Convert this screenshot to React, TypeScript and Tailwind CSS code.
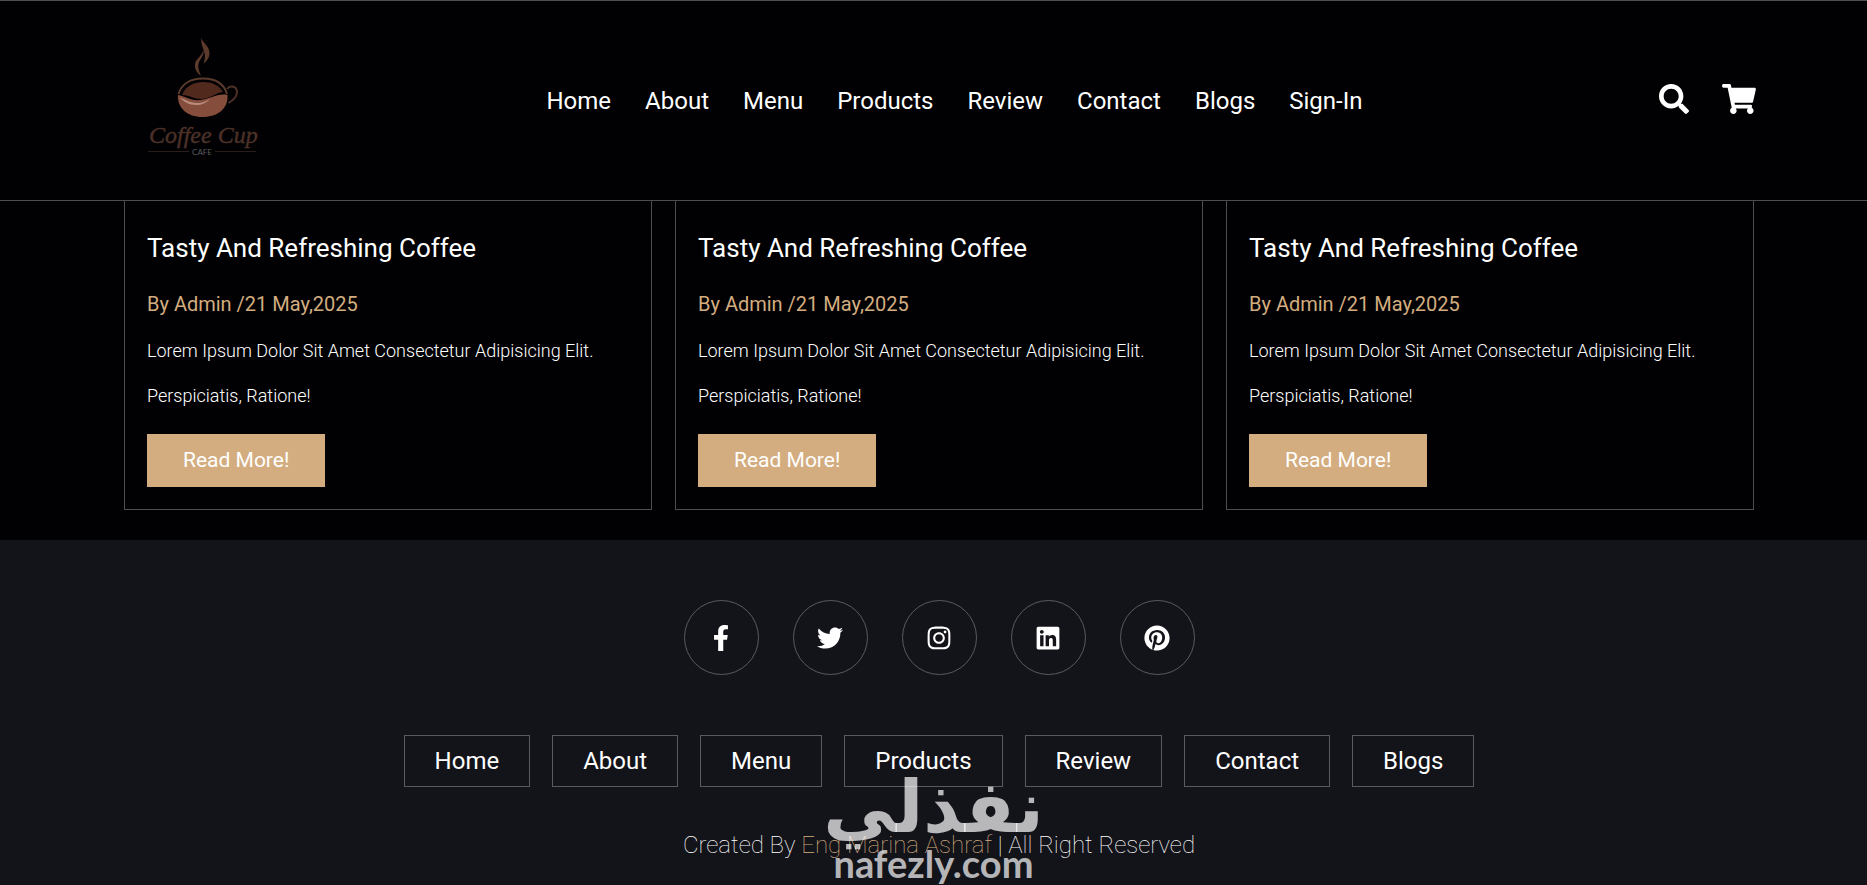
import React from "react";
import {
  FaSearch,
  FaShoppingCart,
  FaFacebookF,
  FaTwitter,
  FaInstagram,
  FaLinkedin,
  FaPinterest,
} from "react-icons/fa";

const links = ["Home", "About", "Menu", "Products", "Review", "Contact", "Blogs"];

const posts = [1, 2, 3];

const socials = [
  { label: "Facebook", icon: <FaFacebookF className="h-[26px] w-auto" /> },
  { label: "Twitter", icon: <FaTwitter className="h-[26px] w-[26px]" /> },
  { label: "Instagram", icon: <FaInstagram className="h-[26px] w-[26px]" /> },
  { label: "LinkedIn", icon: <FaLinkedin className="h-[26px] w-[26px]" /> },
  { label: "Pinterest", icon: <FaPinterest className="h-[26px] w-[26px]" /> },
];

function Logo() {
  return (
    <svg viewBox="0 0 159 159" className="h-[159px] w-[159px]" role="img" aria-label="Coffee Cup Cafe">
      {/* steam */}
      <path d="M77.5 17c1 5 8 8 8 15 0 5-3 8-6 11 1-4 2-7 1-11-1-5-4-9-3-15z" fill="#5c3a2c" />
      <path d="M79.5 29c1 6-4 9-5 14-1 4 1 8 2.5 12-4-3-6.5-7-6-12 .5-5 7-8 8.5-14z" fill="#5c3a2c" />
      {/* cup */}
      <path d="M54.5 73c3-10 12-15.5 24.5-15.5S100 63 103 73" fill="none" stroke="#5c3a2c" strokeWidth="2" />
      <path d="M58 74c3-8 11-13 21-13 9 0 16 3 20 10-8 1-13 7-22 7-8 0-11-4-19-4z" fill="#51291d" />
      <path d="M54 74c7 1 13 6 22 5 11-1 17-7 27.5-5 1 13-9 22-25 22-15 0-25.5-9-24.5-22z" fill="#854e3c" />
      <path d="M56 77c6 1 9 5 17 5 6 0 9-2 13-4-4 4-8 6-14 6-8 0-11-3-16-7z" fill="#b98b7b" />
      <path d="M103 68c3-4 10-3 10 3 0 6-5 9-8.500 11" fill="none" stroke="#4c3129" strokeWidth="2" />
      <text
        x="25"
        y="122"
        fontSize="24"
        fontStyle="italic"
        fill="#4c3129"
        stroke="#4c3129"
        strokeWidth="0.4"
        fontFamily="'Liberation Serif', serif"
      >
        Coffee Cup
      </text>
      <path d="M24 130.5h41M91 130.5h41" stroke="#2b1d18" strokeWidth="1" />
      <text x="78" y="134" fontSize="8" textAnchor="middle" fill="#5a5a5e" fontFamily="Lato, sans-serif">
        CAFE
      </text>
    </svg>
  );
}

export default function App() {
  return (
    <div className="min-h-screen bg-[#010103] text-white flex flex-col font-[Roboto,sans-serif]">
      {/* Header */}
      <header className="flex items-center justify-between border-y border-[#4d4d4e] py-5 pl-[124px] pr-[111px]">
        <a href="#home">
          <Logo />
        </a>
        <nav className="flex text-2xl">
          {[...links, "Sign-In"].map((l) => (
            <a key={l} href="#" className="mx-[17px] hover:text-[#d3ad7f]">
              {l}
            </a>
          ))}
        </nav>
        <div className="flex items-center pb-1">
          <button aria-label="Search" className="ml-[33px]">
            <FaSearch className="h-[30px] w-[30px]" />
          </button>
          <button aria-label="Cart" className="ml-[33px]">
            <FaShoppingCart className="h-[30px] w-[34px]" />
          </button>
        </div>
      </header>

      {/* Blogs */}
      <section className="grid grid-cols-3 gap-[23px] pl-[124px] pr-[113px] pb-[30px]">
        {posts.map((p) => (
          <article key={p} className="border border-t-0 border-[#4d4d4e] px-[22px] pt-[27px] pb-[22px]">
            <h3 className="text-[26px] leading-10">Tasty And Refreshing Coffee</h3>
            <p className="mt-5 text-xl leading-8 text-[#d3ad7f]">By Admin /21 May,2025</p>
            <p className="mt-2 text-lg leading-[45px] font-light">
              Lorem Ipsum Dolor Sit Amet Consectetur Adipisicing Elit. Perspiciatis, Ratione!
            </p>
            <a href="#" className="mt-4 inline-block bg-[#d3ad7f] px-9 text-[21px] leading-[53px]">
              Read More!
            </a>
          </article>
        ))}
      </section>

      {/* Footer */}
      <footer className="relative flex-1 bg-[#13131a] pl-[124px] pr-[113px] pt-[60px] text-center">
        <div className="flex justify-center gap-[34px]">
          {socials.map((s) => (
            <a
              key={s.label}
              href="#"
              aria-label={s.label}
              className="flex h-[75px] w-[75px] items-center justify-center rounded-full border border-[#5a5a5f]"
            >
              {s.icon}
            </a>
          ))}
        </div>
        <div className="mt-[60px] flex justify-center gap-[22px] text-2xl">
          {links.map((l) => (
            <a key={l} href="#" className="border border-[#5a5a5f] px-[30px] leading-[50px]">
              {l}
            </a>
          ))}
        </div>
        <p className="mt-10 text-2xl leading-9 font-thin">
          Created By <span className="text-[#d3ad7f]">Eng Marina Ashraf</span> | All Right Reserved
        </p>

        {/* Watermark */}
        <div className="pointer-events-none absolute bottom-0 left-1/2 flex -translate-x-1/2 flex-col items-center font-bold text-white/70">
          <span lang="ar" dir="rtl" className="font-['DejaVu_Sans',sans-serif] text-[72px] leading-[68px]">
            نفذلي
          </span>
          <span className="font-[Lato,sans-serif] text-[38px] leading-[44px]">nafezly.com</span>
        </div>
      </footer>
    </div>
  );
}
